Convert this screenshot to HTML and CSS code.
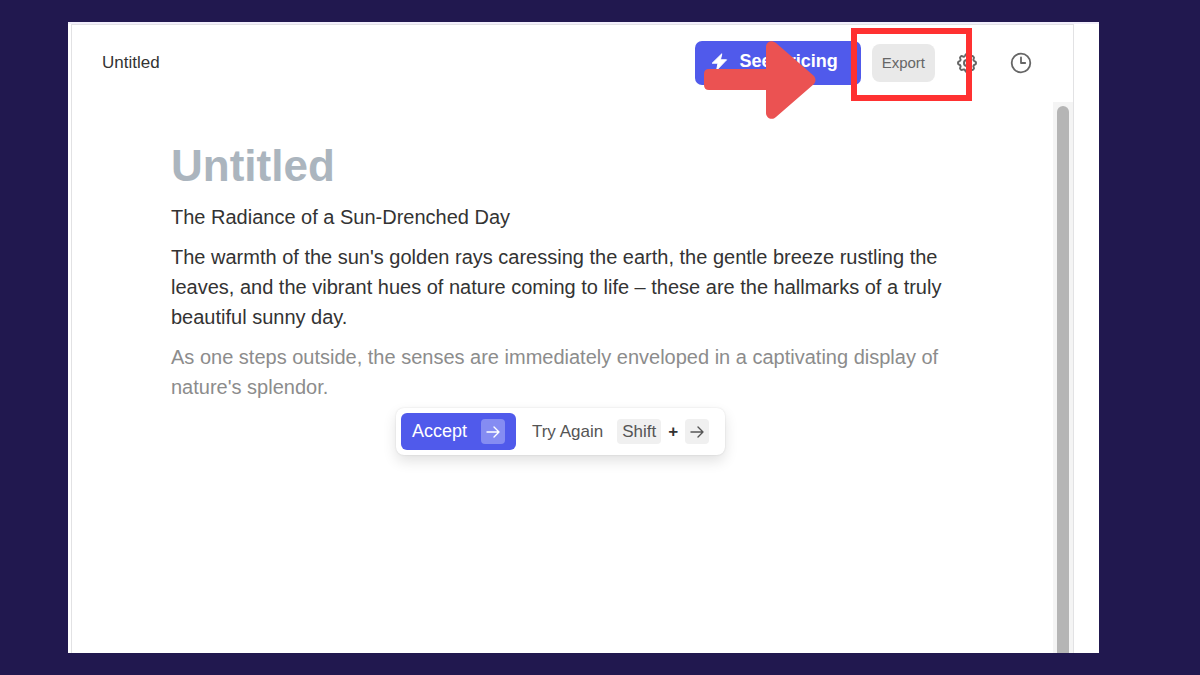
FILE: index.html
```html
<!DOCTYPE html>
<html lang="en">

<head>
    <meta charset="utf-8">
    <meta name="viewport" content="width=device-width, initial-scale=1.0">
    <title>Untitled</title>
    <link rel="stylesheet" href="styles.css">
</head>

<body>
    <main class="window">
        <section class="editor">
            <header class="topbar">
                <p class="doc-name">Untitled</p>
                <div class="actions">
                    <button class="pricing" type="button">
                        <svg width="18" height="18" viewBox="0 0 18 18" aria-hidden="true">
                            <path d="M11.8 .8 2.2 10.2h5.8L6.6 17.2l10-10.4h-6.2z" fill="#fff" stroke="#fff" stroke-linejoin="round" />
                        </svg>
                        See Pricing
                    </button>
                    <button class="export" type="button">Export</button>
                    <button class="icon-button settings" type="button" aria-label="Settings">
                        <svg width="24" height="24" viewBox="0 0 24 24" fill="none" stroke="#666" stroke-width="2" stroke-linejoin="round" aria-hidden="true">
                            <path d="M10.3 4.3c.4-1.7 3-1.7 3.4 0a1.7 1.7 0 0 0 2.6 1.1c1.5-1 3.3.8 2.4 2.3a1.7 1.7 0 0 0 1 2.6c1.8.4 1.8 3 0 3.4a1.7 1.7 0 0 0-1 2.6c.9 1.5-.9 3.3-2.4 2.4a1.7 1.7 0 0 0-2.6 1c-.4 1.8-3 1.8-3.4 0a1.7 1.7 0 0 0-2.6-1c-1.5.9-3.3-.9-2.4-2.4a1.7 1.7 0 0 0-1-2.6c-1.8-.4-1.8-3 0-3.4a1.7 1.7 0 0 0 1-2.6c-.9-1.5.9-3.3 2.4-2.3 1 .6 2.3 0 2.6-1.1z" />
                            <circle cx="12" cy="12" r="3" />
                        </svg>
                    </button>
                    <button class="icon-button" type="button" aria-label="History">
                        <svg width="22" height="22" viewBox="0 0 22 22" fill="none" stroke="#666" stroke-width="1.8" stroke-linecap="round" stroke-linejoin="round" aria-hidden="true">
                            <circle cx="11" cy="11" r="9.3" />
                            <path d="M11 5.5V11h4.2" />
                        </svg>
                    </button>
                </div>
                <!-- annotations on top of the toolbar -->
                <svg class="arrow" width="112" height="78" viewBox="0 0 112 78" aria-hidden="true">
                    <path d="M5 28h57V6c0-5 5-8 10-4l38 33q3 4 0 8L72 76c-4 4-10 1-10-4V49H5q-5 0-5-5V33q0-5 5-5z" fill="#eb5252" />
                </svg>
                <div class="highlight"></div>
            </header>

            <div class="scroll-area">
                <article class="document">
                    <h1>Untitled</h1>
                    <p>The Radiance of a Sun-Drenched Day</p>
                    <p>The warmth of the sun's golden rays caressing the earth, the gentle breeze rustling the leaves, and the vibrant hues of nature coming to life – these are the hallmarks of a truly beautiful sunny day.</p>
                    <p class="suggestion">As one steps outside, the senses are immediately enveloped in a captivating display of nature's splendor.</p>
                    <div class="popup">
                        <button class="accept" type="button">
                            Accept
                            <span class="key">
                                <svg width="14" height="14" viewBox="0 0 14 14" aria-hidden="true"><path d="M1 7h12M8 2l5 5-5 5" /></svg>
                            </span>
                        </button>
                        <button class="retry" type="button">
                            Try Again
                            <span class="shortcut">
                                <span class="key">Shift</span>
                                <b>+</b>
                                <span class="key">
                                    <svg width="14" height="14" viewBox="0 0 14 14" aria-hidden="true"><path d="M1 7h12M8 2l5 5-5 5" /></svg>
                                </span>
                            </span>
                        </button>
                    </div>
                </article>
                <div class="scrollbar">
                    <div class="thumb"></div>
                </div>
            </div>
        </section>
    </main>
</body>

</html>
```

FILE: styles.css
```css
* {
    box-sizing: border-box;
}

body {
    margin: 0;
    min-height: 100vh;
    display: flex;
    padding: 22px 101px 22px 68px;
    background-color: #21184f;
    font-family: "Liberation Sans", Arial, sans-serif;
    color: #333;
}

h1,
p {
    margin: 0;
}

button {
    border: 0;
    padding: 0;
    background: none;
    font-family: inherit;
    color: inherit;
    cursor: pointer;
}

.window {
    flex: 1;
    display: flex;
    padding: 0 25px 0 3px;
    border-top: 2px solid #f1eefb;
    background-color: #fff;
}

.editor {
    flex: 1;
    display: flex;
    flex-direction: column;
    border: 1px solid #e2e2e4;
    border-bottom: 0;
}

/* top bar */

.topbar {
    position: relative;
    display: flex;
    justify-content: space-between;
    align-items: center;
    height: 77px;
    padding: 0 41px 2px 30px;
}

.doc-name {
    font-size: 17px;
}

.actions {
    display: flex;
    align-items: center;
}

.pricing {
    display: flex;
    align-items: center;
    gap: 12px;
    height: 44px;
    padding: 0 23px 2px 15px;
    border-radius: 7px;
    background-color: #505aeb;
    color: #fff;
    font-size: 18px;
    font-weight: bold;
}

.export {
    height: 38px;
    margin-left: 11px;
    padding: 0 10px;
    border-radius: 8px;
    background-color: #e9e9e9;
    color: #666;
    font-size: 15px;
}

.icon-button {
    display: flex;
    margin-left: 31px;
}

.settings {
    margin-left: 20px;
}

.arrow {
    position: absolute;
    right: 257px;
    top: 16px;
}

.highlight {
    position: absolute;
    right: 101px;
    top: 3px;
    width: 121px;
    height: 73px;
    border: 6px solid #ff3131;
}

/* document */

.scroll-area {
    flex: 1;
    display: flex;
}

.document {
    flex: 1;
    padding: 36px 103px 40px 99px;
    font-size: 20px;
    line-height: 30px;
}

.document h1 {
    margin-bottom: 8px;
    color: #abb5be;
    font-size: 44px;
    line-height: 56px;
}

.document p {
    margin-bottom: 10px;
}

.document .suggestion {
    margin-bottom: 6px;
    color: #8c8c8c;
}

.scrollbar {
    width: 20px;
    display: flex;
    padding: 4px 4px 0;
    background-color: #f4f4f4;
}

.thumb {
    flex: 1;
    border-radius: 6px 6px 0 0;
    background-color: #b5b5b5;
}

/* suggestion popup */

.popup {
    display: flex;
    align-items: center;
    gap: 16px;
    width: fit-content;
    margin: 0 auto;
    padding: 5px 16px 5px 5px;
    border-radius: 8px;
    background-color: #fff;
    box-shadow: 0 0 2px rgba(0, 0, 0, 0.12), 0 6px 14px rgba(0, 0, 0, 0.12);
}

.accept,
.retry,
.shortcut {
    display: flex;
    align-items: center;
}

.accept,
.retry {
    gap: 14px;
    height: 37px;
}

.accept {
    padding: 0 11px;
    border-radius: 6px;
    background-color: #505aeb;
    color: #fff;
    font-size: 18px;
}

.retry {
    color: #555;
    font-size: 17px;
}

.shortcut {
    gap: 7px;
}

.shortcut b {
    color: #333;
}

.key {
    display: flex;
    align-items: center;
    height: 25px;
    padding: 0 5px;
    border-radius: 4px;
    background-color: #f0f0f0;
}

.key svg {
    fill: none;
    stroke: #555;
    stroke-width: 1.4;
    stroke-linecap: round;
    stroke-linejoin: round;
}

.accept .key {
    background-color: #858cf2;
}

.accept .key svg {
    stroke: #fff;
}
```
